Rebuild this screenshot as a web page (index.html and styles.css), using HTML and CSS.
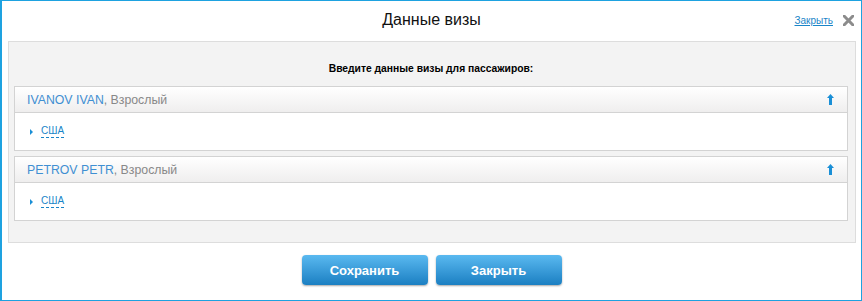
FILE: index.html
```html
<!DOCTYPE html>
<html lang="ru">
<head>
  <meta charset="UTF-8" />
  <title>Данные визы</title>
  <link rel="stylesheet" href="styles.css">
</head>
<body>
  <div class="dialog">

    <!-- Заголовок -->
    <header class="dialog-head">
      <span></span>
      <h1 class="dialog-title">Данные визы</h1>
      <div class="dialog-actions">
        <a href="#" class="close-link">Закрыть</a>
        <svg class="close-icon" width="11" height="11" viewBox="0 0 11 11">
          <path d="M1 1 L10 10 M10 1 L1 10" stroke="#8c8c8c" stroke-width="3" stroke-linecap="square" />
        </svg>
      </div>
    </header>

    <!-- Пассажиры -->
    <main class="panel">
      <p class="panel-heading">Введите данные визы для пассажиров:</p>

      <section class="pax">
        <div class="pax-head">
          <span><span class="pax-name">IVANOV IVAN</span><span class="pax-type">, Взрослый</span></span>
          <svg class="pax-arrow" width="7" height="11" viewBox="0 0 7 11">
            <path d="M3.5 0 L7 4 L5 4 L5 11 L2 11 L2 4 L0 4 Z" fill="#1a8fd6" />
          </svg>
        </div>
        <div class="pax-body">
          <span class="tri"></span>
          <a href="#" class="country">США</a>
        </div>
      </section>

      <section class="pax">
        <div class="pax-head">
          <span><span class="pax-name">PETROV PETR</span><span class="pax-type">, Взрослый</span></span>
          <svg class="pax-arrow" width="7" height="11" viewBox="0 0 7 11">
            <path d="M3.5 0 L7 4 L5 4 L5 11 L2 11 L2 4 L0 4 Z" fill="#1a8fd6" />
          </svg>
        </div>
        <div class="pax-body">
          <span class="tri"></span>
          <a href="#" class="country">США</a>
        </div>
      </section>
    </main>

    <!-- Кнопки -->
    <div class="buttons">
      <button type="button" class="btn">Сохранить</button>
      <button type="button" class="btn">Закрыть</button>
    </div>

  </div>
</body>
</html>
```

FILE: styles.css
```css
body {
  margin: 0;
  padding: 0;
  font-family: Arial, "Liberation Sans", sans-serif;
  background-color: #ffffff;
}
.dialog {
  box-sizing: border-box;
  width: 862px;
  height: 301px;
  border: 1px solid #1ea2e0;
  border-left-width: 2px;
  background-color: #ffffff;
}
.dialog-head {
  display: grid;
  grid-template-columns: 1fr auto 1fr;
  align-items: center;
  height: 40px;
}
.dialog-title {
  margin: 0;
  font-size: 16px;
  font-weight: normal;
  color: #111111;
  line-height: 20px;
  padding-bottom: 2px;
}
.dialog-actions {
  justify-self: end;
  display: flex;
  align-items: center;
  padding-right: 7px;
  padding-bottom: 1px;
}
.close-link {
  font-size: 10px;
  color: #1a85c8;
  text-decoration: underline;
  margin-right: 10px;
}
.close-icon {
  display: block;
}
.panel {
  display: block;
  margin: 0 5px 0 6px;
  padding: 0 7px 21px 5px;
  background-color: #f3f3f3;
  border: 1px solid #dddddd;
}
.panel-heading {
  margin: 0;
  padding: 20px 0 10px;
  text-align: center;
  font-size: 10.3px;
  font-weight: bold;
  line-height: 14px;
  color: #000000;
}
.pax {
  border: 1px solid #d3d3d3;
  background-color: #ffffff;
  margin-bottom: 5px;
}
.pax:last-child {
  margin-bottom: 0;
}
.pax-head {
  display: flex;
  justify-content: space-between;
  align-items: center;
  height: 25px;
  padding: 0 13px 0 12px;
  background: linear-gradient(#ffffff, #efeeee);
  border-bottom: 1px solid #d3d3d3;
  font-size: 12.3px;
}
.pax-name {
  color: #3f8fd2;
}
.pax-type {
  color: #888888;
}
.pax-arrow {
  display: block;
}
.pax-body {
  display: flex;
  align-items: center;
  height: 37px;
  padding-left: 15px;
}
.tri {
  width: 0;
  height: 0;
  border-top: 3px solid transparent;
  border-bottom: 3px solid transparent;
  border-left: 3px solid #1a8fd6;
  margin-right: 8px;
}
.country {
  font-size: 10px;
  color: #1a85c8;
  text-decoration: none;
  border-bottom: 1px dashed #1a85c8;
  line-height: 12px;
}
.buttons {
  display: flex;
  justify-content: center;
  gap: 8px;
  margin-top: 12px;
}
.btn {
  width: 126px;
  height: 30px;
  border: none;
  border-radius: 4px;
  background: linear-gradient(#5ab9f0, #1b7fc2);
  box-shadow: 0 1px 2px rgba(0, 0, 0, 0.35);
  color: #ffffff;
  font-family: Arial, "Liberation Sans", sans-serif;
  font-size: 13px;
  font-weight: bold;
  cursor: pointer;
}
```
